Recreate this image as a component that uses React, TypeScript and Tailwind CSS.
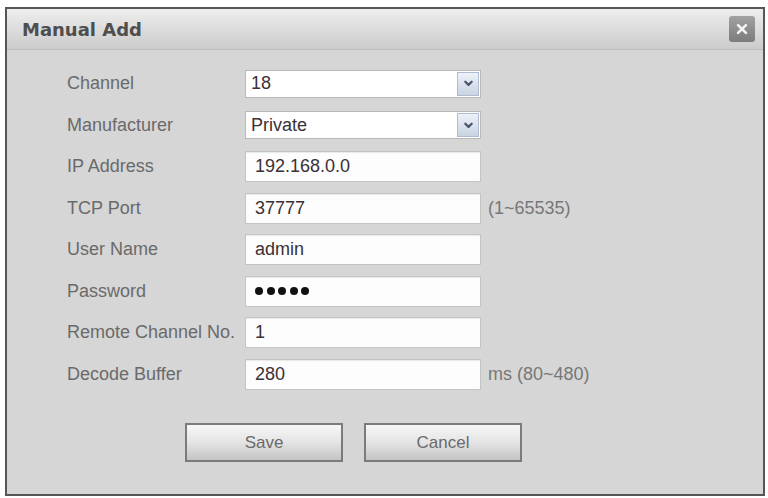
import React from "react";

const font = { fontFamily: '"Liberation Sans", Arial, sans-serif' };

function Chevron() {
  return (
    <svg viewBox="0 0 12 12" className="h-[11px] w-[11px]">
      <path d="M2.5 4 L6 7.5 L9.5 4" fill="none" stroke="#46556c" strokeWidth="2.4" strokeLinecap="round" strokeLinejoin="round" />
    </svg>
  );
}

function SelectBox({ value }: { value: string }) {
  return (
    <div className="flex h-[28px] w-[236px] items-center border border-[#b9b9b9] bg-white pl-[5px] pr-[1px]">
      <span className="flex-1 text-[18px] text-[#3a3035]">{value}</span>
      <span className="flex h-[24px] w-[22px] items-center justify-center border border-[#aebbd0] bg-gradient-to-b from-[#eef2f8] to-[#c9d3e1]">
        <Chevron />
      </span>
    </div>
  );
}

function TextBox({ children }: { children: React.ReactNode }) {
  return (
    <div className="flex h-[31px] w-[236px] items-center border border-[#c4c4c4] bg-[#fdfdfd] pl-[9px] text-[18px] text-[#3a3035] shadow-[inset_0_1px_1px_rgba(0,0,0,0.08)]">
      {children}
    </div>
  );
}

function Row({ label, children, hint }: { label: string; children: React.ReactNode; hint?: string }) {
  return (
    <div className="flex h-[41.5px] items-center">
      <span className="w-[178px] text-[18px] text-[#6a6a6a]">{label}</span>
      {children}
      {hint && <span className="ml-[7px] text-[18px] text-[#777]">{hint}</span>}
    </div>
  );
}

export default function App() {
  return (
    <div className="h-[498px] w-[768px] bg-white pl-[5px] pt-[7px]" style={font}>
      <div className="flex h-[489px] w-[760px] flex-col border-2 border-[#565656] bg-[#d6d6d6]">
        {/* Title bar */}
        <div className="flex h-[41px] items-center justify-between border-b border-[#bcbcbc] bg-gradient-to-b from-[#eeeeee] to-[#cbcbcb] pl-[15px] pr-[8px]">
          <h1 className="text-[18px] font-bold text-[#4e4e4e]" style={{ fontFamily: '"DejaVu Sans", Verdana, sans-serif' }}>
            Manual Add
          </h1>
          <button className="flex h-[26px] w-[26px] items-center justify-center rounded-[3px] bg-gradient-to-b from-[#a2a2a2] to-[#7c7c7c]">
            <svg viewBox="0 0 16 16" className="h-[14px] w-[14px]">
              <path d="M3.5 3.5 L12.5 12.5 M12.5 3.5 L3.5 12.5" stroke="#f4f4f4" strokeWidth="3" strokeLinecap="round" />
            </svg>
          </button>
        </div>

        {/* Form */}
        <div className="pl-[60px] pt-[13px]">
          <Row label="Channel">
            <SelectBox value="18" />
          </Row>
          <Row label="Manufacturer">
            <SelectBox value="Private" />
          </Row>
          <Row label="IP Address">
            <TextBox>192.168.0.0</TextBox>
          </Row>
          <Row label="TCP Port" hint="(1~65535)">
            <TextBox>37777</TextBox>
          </Row>
          <Row label="User Name">
            <TextBox>admin</TextBox>
          </Row>
          <Row label="Password">
            <TextBox>
              <span className="flex gap-[3.5px]">
                {[0, 1, 2, 3, 4].map((i) => (
                  <span key={i} className="h-[8px] w-[8px] rounded-full bg-[#111]" />
                ))}
              </span>
            </TextBox>
          </Row>
          <Row label="Remote Channel No.">
            <TextBox>1</TextBox>
          </Row>
          <Row label="Decode Buffer" hint="ms (80~480)">
            <TextBox>280</TextBox>
          </Row>

          <div className="ml-[118px] mt-[28px] flex gap-[21px]">
            <button className="h-[39px] w-[158px] border-2 border-[#7b7b7b] bg-gradient-to-b from-[#f7f7f7] via-[#e4e4e4] to-[#c4c4c4] text-[17px] text-[#6a6a6a]">
              Save
            </button>
            <button className="h-[39px] w-[158px] border-2 border-[#7b7b7b] bg-gradient-to-b from-[#f7f7f7] via-[#e4e4e4] to-[#c4c4c4] text-[17px] text-[#6a6a6a]">
              Cancel
            </button>
          </div>
        </div>
      </div>
    </div>
  );
}
